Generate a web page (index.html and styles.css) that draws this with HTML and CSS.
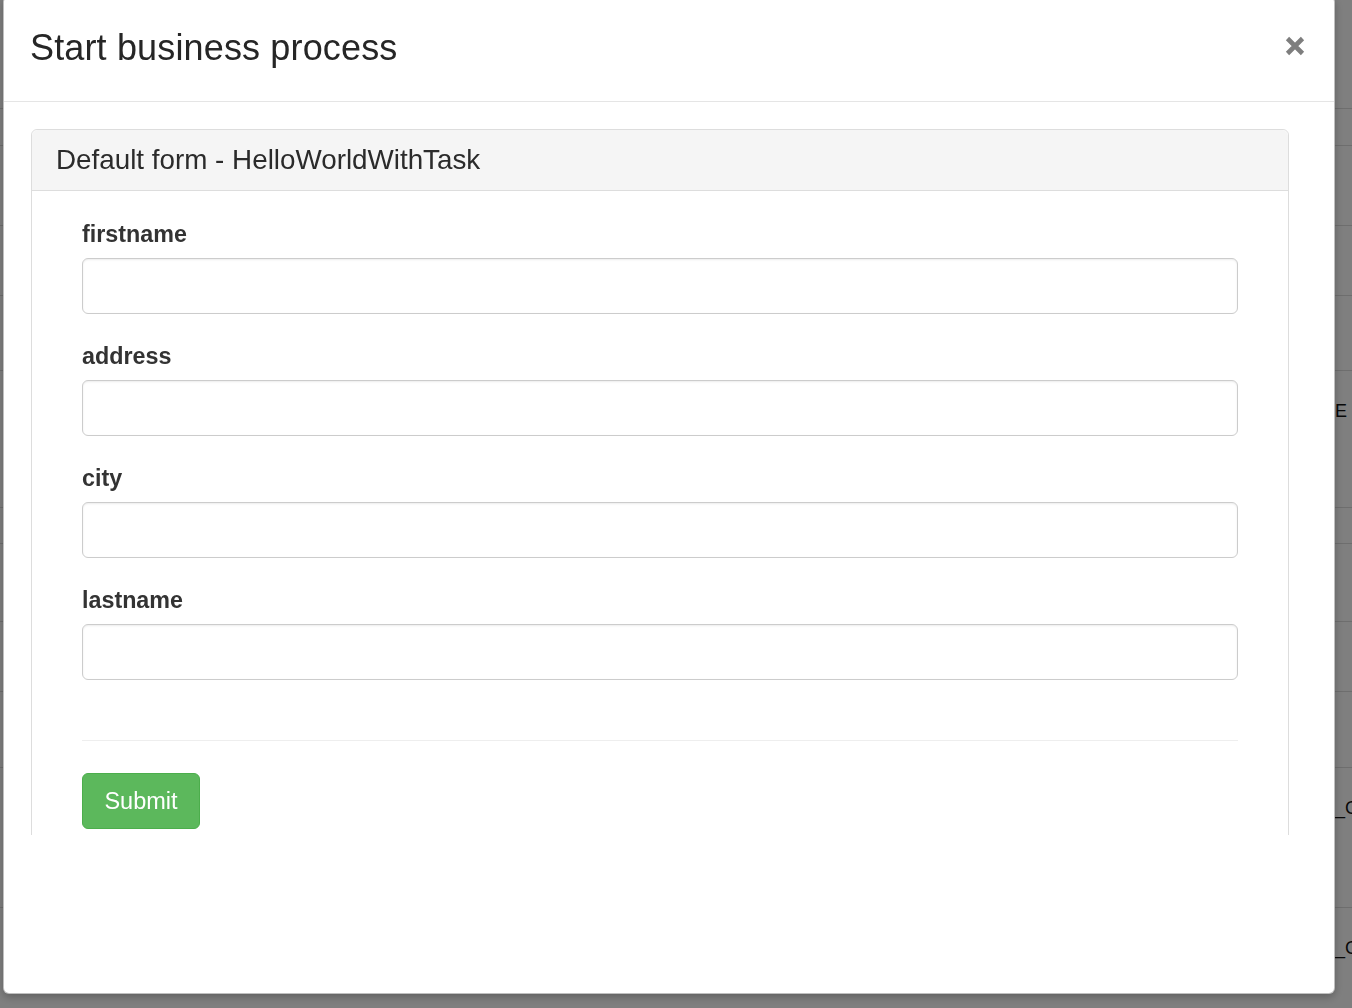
FILE: index.html
```html
<!DOCTYPE html>
<html>
<head>
<meta charset="utf-8">
<link rel="stylesheet" href="styles.css">
</head>
<body>
<div class="page">
  <div class="row"><span></span><span></span></div>
  <div class="row"><span></span><span></span></div>
  <div class="row"><span></span><span></span></div>
  <div class="row"><span></span><span></span></div>
  <div class="row"><span></span><span></span></div>
  <div class="row"><span></span><span class="cell">E</span></div>
  <div class="row"><span></span><span></span></div>
  <div class="row"><span></span><span></span></div>
  <div class="row"><span></span><span></span></div>
  <div class="row"><span></span><span></span></div>
  <div class="row"><span></span><span class="cell">_C</span></div>
  <div class="row"><span></span><span class="cell">_C</span></div>
</div>
<div class="overlay"></div>
<div class="modal">
  <div class="modal-header">
    <h4 class="modal-title">Start business process</h4>
    <button class="close" type="button" aria-label="Close">
      <svg width="20" height="20" viewBox="0 0 20 20"><path d="M2.5 2.5 L17.5 17.5 M17.5 2.5 L2.5 17.5" stroke="#7e7e7e" stroke-width="4.6" fill="none"/></svg>
    </button>
  </div>
  <div class="modal-body">
    <div class="panel">
      <div class="panel-heading">Default form - HelloWorldWithTask</div>
      <div class="panel-body">
        <div class="form-group">
          <label class="label">firstname</label>
          <input class="input" type="text">
        </div>
        <div class="form-group">
          <label class="label">address</label>
          <input class="input" type="text">
        </div>
        <div class="form-group">
          <label class="label">city</label>
          <input class="input" type="text">
        </div>
        <div class="form-group">
          <label class="label">lastname</label>
          <input class="input" type="text">
        </div>
        <hr class="divider">
        <button class="btn-submit" type="button">Submit</button>
      </div>
    </div>
  </div>
  <div class="modal-footer"></div>
</div>
</body>
</html>
```
FILE: styles.css
```css
* { box-sizing: border-box; }
html, body { margin: 0; padding: 0; }
body {
  width: 1352px;
  height: 1008px;
  overflow: hidden;
  background: #fff;
  font-family: "Liberation Sans", Arial, sans-serif;
  color: #333;
}

/* background page */
.page { display: flex; flex-direction: column; }
.row {
  display: grid;
  grid-template-columns: 1335px 1fr;
  border-bottom: 1px solid #dcdcdc;
}
.row:nth-child(1) { height: 109px; }
.row:nth-child(2) { height: 37px; }
.row:nth-child(3) { height: 80px; }
.row:nth-child(4) { height: 70px; }
.row:nth-child(5) { height: 75px; }
.row:nth-child(6) { height: 137px; }
.row:nth-child(7) { height: 36px; }
.row:nth-child(8) { height: 78px; }
.row:nth-child(9) { height: 70px; }
.row:nth-child(10) { height: 76px; }
.row:nth-child(11) { height: 140px; }
.row:nth-child(12) { height: 101px; border-bottom: 0; }
.cell {
  padding-top: 29px;
  font-size: 18px;
  line-height: 22px;
  color: #111;
  white-space: nowrap;
  overflow: hidden;
}

.overlay {
  position: fixed;
  inset: 0;
  background: rgba(0, 0, 0, 0.5);
}

/* modal */
.modal {
  position: fixed;
  left: 3px;
  top: -4px;
  width: 1332px;
  height: 998px;
  background: #fff;
  border: 1px solid rgba(0, 0, 0, 0.25);
  border-radius: 6px;
  box-shadow: 0 3px 8px rgba(0, 0, 0, 0.25);
  display: flex;
  flex-direction: column;
}
.modal-header {
  height: 105px;
  flex: none;
  display: flex;
  align-items: center;
  justify-content: space-between;
  padding: 0 29px 2px 26px;
  border-bottom: 1px solid #e5e5e5;
}
.modal-title {
  margin: 0;
  font-size: 36px;
  font-weight: normal;
  color: #262626;
  letter-spacing: 0.15px;
}
.close {
  border: 0;
  background: none;
  padding: 0;
  margin: 0 0 4px 0;
  width: 20px;
  height: 20px;
  display: flex;
}
.modal-body {
  height: 733px;
  flex: none;
  overflow: hidden;
  padding: 27px 45px 0 27px;
}
.modal-footer { flex: 1; }

.panel {
  border: 1px solid #ddd;
  border-radius: 6px;
  height: 760px;
}
.panel-heading {
  height: 61px;
  background: #f5f5f5;
  border-bottom: 1px solid #ddd;
  border-radius: 6px 6px 0 0;
  padding: 0 24px;
  display: flex;
  align-items: center;
  font-size: 27.8px;
  color: #2b2b2b;
}
.panel-body {
  padding: 27px 50px 0 50px;
}
.form-group { margin-bottom: 26px; }
.label {
  display: block;
  font-size: 23.3px;
  font-weight: bold;
  line-height: 33px;
  margin-bottom: 7px;
  color: #333;
}
.input {
  display: block;
  width: 100%;
  height: 56px;
  border: 1.5px solid #ccc;
  border-radius: 6px;
  background: #fff;
  box-shadow: inset 0 1px 2px rgba(0, 0, 0, 0.08);
  font-size: 23px;
  padding: 0 20px;
}
.divider {
  border: 0;
  border-top: 1.5px solid #eee;
  margin: 60px 0 32px 0;
}
.btn-submit {
  display: block;
  width: 118px;
  height: 56px;
  background: #5cb85c;
  border: 1px solid #4cae4c;
  border-radius: 6px;
  color: #fff;
  font-family: "Liberation Sans", Arial, sans-serif;
  font-size: 23.5px;
  padding: 0;
}
```
